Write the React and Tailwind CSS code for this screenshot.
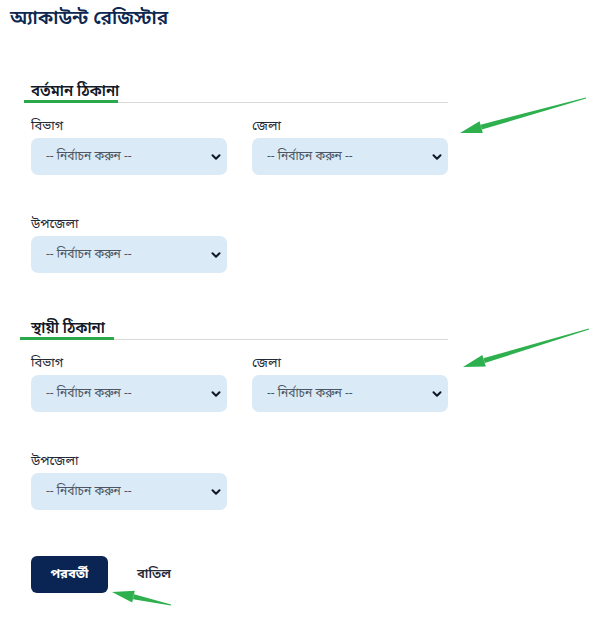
import { ChevronDown } from "lucide-react";

const font = { fontFamily: '"Noto Sans Bengali", "Noto Sans", "Liberation Sans", sans-serif' };

function SelectBox({ label }) {
  return (
    <div className="w-[196px]">
      <div className="text-[13px] leading-[16px] text-[#1f2937] mb-[3px]">{label}</div>
      <div className="h-[37px] rounded-[7px] bg-[#daeaf6] flex items-center justify-between pl-[15px] pr-[4px]">
        <span className="text-[12px] text-[#4b5563]">-- নির্বাচন করুন --</span>
        <ChevronDown size={14} strokeWidth={3.5} className="text-[#111827]" />
      </div>
    </div>
  );
}

function SectionTitle({ title, greenLeft, greenWidth }) {
  return (
    <div className="relative w-[424px] border-b border-[#d9d9d9] pb-[2px] pl-[7px]">
      <h3 className="text-[15px] leading-[16px] font-semibold text-[#111827]">{title}</h3>
      <div className="absolute bottom-[-1px] h-[3px] bg-[#2aa84a]" style={{ left: greenLeft, width: greenWidth }} />
    </div>
  );
}

function Address({ title, greenLeft, greenWidth }) {
  return (
    <div className="flex flex-col">
      <SectionTitle title={title} greenLeft={greenLeft} greenWidth={greenWidth} />
      <div className="pl-[7px] mt-[16px] flex gap-[25px]">
        <SelectBox label="বিভাগ" />
        <SelectBox label="জেলা" />
      </div>
      <div className="pl-[7px] mt-[42px]">
        <SelectBox label="উপজেলা" />
      </div>
    </div>
  );
}

function Arrow({ x1, y1, x2, y2 }) {
  const dx = x2 - x1;
  const dy = y2 - y1;
  const len = Math.hypot(dx, dy);
  const ux = dx / len;
  const uy = dy / len;
  const px = -uy;
  const py = ux;
  const hb = 22;
  const bx = x2 - ux * hb;
  const by = y2 - uy * hb;
  const head = `${x2},${y2} ${bx + px * 6},${by + py * 6} ${bx - px * 6},${by - py * 6}`;
  const shaft = `${x1 + px * 0.5},${y1 + py * 0.5} ${bx + px * 2.5},${by + py * 2.5} ${bx - px * 2.5},${by - py * 2.5} ${x1 - px * 0.5},${y1 - py * 0.5}`;
  return (
    <g fill="#2eb04f">
      <polygon points={shaft} />
      <polygon points={head} />
    </g>
  );
}

export default function App() {
  return (
    <div className="relative w-[613px] h-[617px] bg-white overflow-hidden" style={font}>
      <div className="pl-[10px] pt-[6px]">
        <h1 className="text-[19px] leading-[28px] font-semibold text-[#0d2750]">অ্যাকাউন্ট রেজিস্টার</h1>
      </div>

      <div className="pl-[24px] mt-[50px] flex flex-col gap-[48px]">
        <Address title="বর্তমান ঠিকানা" greenLeft={0} greenWidth={94} />
        <Address title="স্থায়ী ঠিকানা" greenLeft={-4} greenWidth={94} />
      </div>

      <div className="pl-[31px] mt-[46px] flex items-center gap-[29px]">
        <button className="w-[77px] h-[37px] rounded-[6px] bg-[#0a2453] text-white text-[13px] font-bold">পরবর্তী</button>
        <button className="text-[13px] font-semibold text-[#1f2937]">বাতিল</button>
      </div>

      <svg className="absolute inset-0 pointer-events-none" width="613" height="617">
        <Arrow x1={586} y1={98} x2={460} y2={133} />
        <Arrow x1={589} y1={329} x2={463} y2={367} />
        <Arrow x1={171} y1={605} x2={112} y2={592} />
      </svg>
    </div>
  );
}
